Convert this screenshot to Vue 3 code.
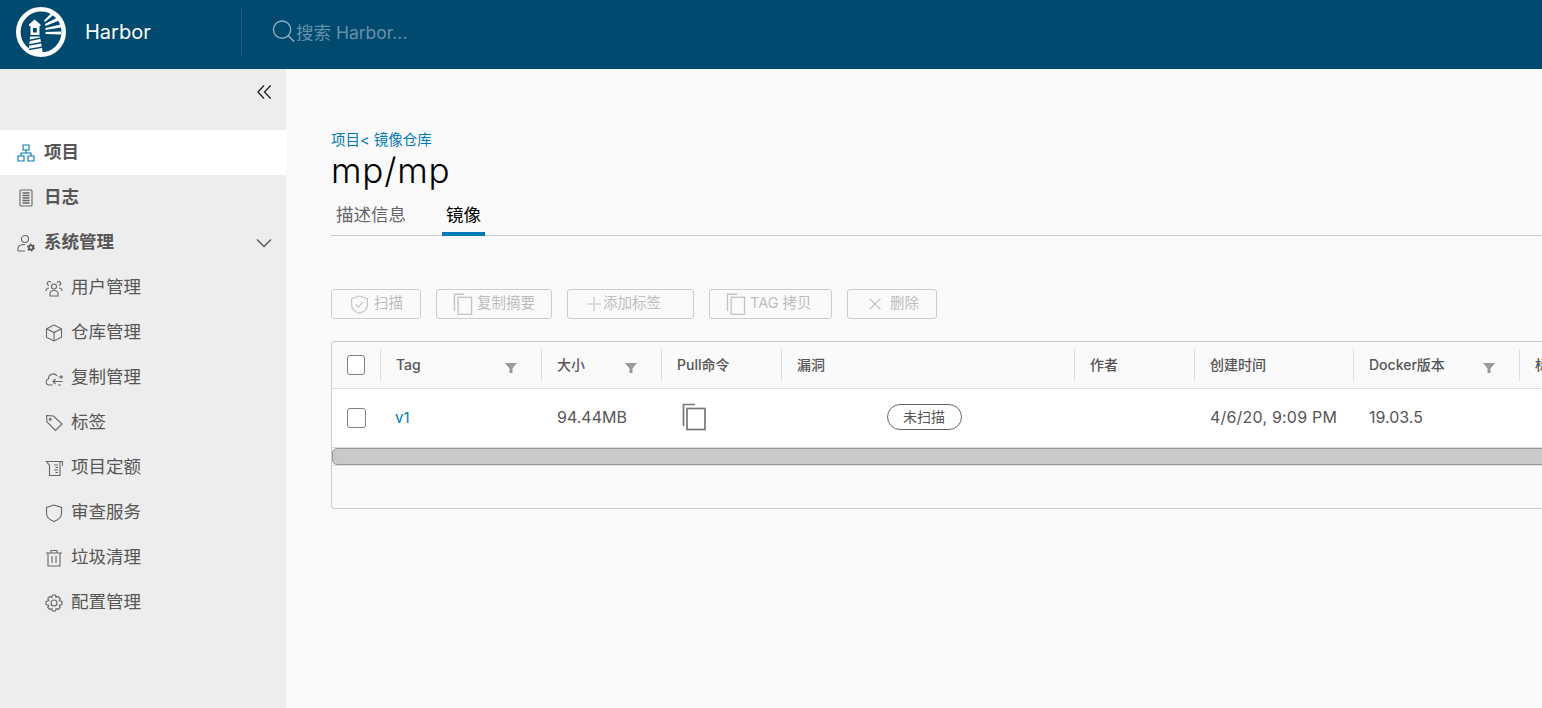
<template>
  <div class="page">
    <header class="topbar">
      <svg class="logo" viewBox="0 0 50 50">
        <circle cx="25" cy="25" r="22.7" fill="none" stroke="#fff" stroke-width="4.6" />
        <path class="logo-fill" d="M18.500 12.500 24.500 17.500V19H13V17.500Z" />
        <path class="logo-fill" d="M14.500 19H23.500V28H14.500ZM17 21V25.500H20.800V21Z" fill-rule="evenodd" />
        <path class="logo-fill" d="M14 29.500H24L27 47H12.500Z" />
        <path class="logo-cut" d="M13 33.500 25 31M13 38 26 35.500M13 42.500 27 40" />
        <path class="logo-fill" d="M28 13.500 36 5.500 38.500 7 29 15ZM29 17 41.500 10.500 43 13.500 29.500 19ZM29.500 21 44.500 17.500 45 20.500 29.500 23ZM29.500 25 45 24.500 45 27.500 29.500 27Z" />
      </svg>
      <span class="brand">Harbor</span>
      <div class="search">
        <svg class="search-icon" viewBox="0 0 24 24">
          <circle cx="10.5" cy="10" r="9" />
          <path d="M17 16.500 23 22.500" />
        </svg>
        <span>搜索 Harbor...</span>
      </div>
    </header>

    <div class="body">
      <aside class="sidebar">
        <div class="collapse">
          <svg viewBox="0 0 16 16"><path d="M7.500 1 1 8 7.500 15M14.500 1 8 8 14.500 15" /></svg>
        </div>
        <nav>
          <a class="nav-item top active">
            <svg class="nav-icon blue" viewBox="0 0 18 18">
              <path d="M6 1h6v5H6zM1 12h6v5H1zM11 12h6v5h-6zM9 6v3M4 12V9h10v3" />
            </svg>
            <span class="label">项目</span>
          </a>
          <a class="nav-item top">
            <svg class="nav-icon" viewBox="0 0 18 18">
              <rect x="3" y="1" width="12" height="16" rx="1" />
              <path class="thick" d="M5.500 4h7M5.500 6.500h7M5.500 9h7M5.500 11.500h7M5.500 14h7" />
            </svg>
            <span class="label">日志</span>
          </a>
          <a class="nav-item top">
            <svg class="nav-icon" viewBox="0 0 18 18">
              <circle cx="8" cy="5" r="3.500" />
              <path d="M1 17v-2.500c0-2.500 3-4 7-4M1 17h7" />
              <circle class="gear-teeth" cx="14" cy="13.500" r="3.300" />
              <circle class="gear" cx="14" cy="13.500" r="2.100" />
            </svg>
            <span class="label">系统管理</span>
            <svg class="chevron" viewBox="0 0 16 10"><path d="M1 1.500 8 8.500 15 1.500" /></svg>
          </a>

          <a v-for="child in children" :key="child.label" class="nav-item sub">
            <svg class="nav-icon" viewBox="0 0 18 18" v-html="child.icon"></svg>
            <span class="label">{{ child.label }}</span>
          </a>
        </nav>
      </aside>

      <main class="content">
        <div class="crumbs">项目&lt; 镜像仓库</div>
        <h1>mp/mp</h1>
        <div class="tabs">
          <span class="tab">描述信息</span>
          <span class="tab current">镜像</span>
        </div>

        <div class="actions">
          <button
            v-for="btn in buttons"
            :key="btn.label"
            :style="{ width: btn.width + 'px', paddingLeft: btn.pad + 'px', gap: btn.gap + 'px' }"
          >
            <svg :style="{ width: btn.size + 'px', height: btn.size + 'px' }" viewBox="0 0 18 18" v-html="btn.icon"></svg>
            <span class="btn-text">{{ btn.label }}</span>
          </button>
        </div>

        <div class="grid">
          <div class="row head">
            <div v-for="col in columns" :key="col.label" class="cell" :style="{ width: col.width + 'px' }">
              <span v-if="col.check" class="box"></span>
              <template v-else>{{ col.label }}</template>
              <svg v-if="col.filter" class="filter" viewBox="0 0 12 12"><path d="M0 1h12L7.500 6.500V11h-3V6.500Z" /></svg>
            </div>
          </div>
          <div class="row data">
            <div class="cell check" style="width: 49px"><span class="box"></span></div>
            <div class="cell link" style="width: 161px">v1</div>
            <div class="cell" style="width: 120px">94.44MB</div>
            <div class="cell" style="width: 120px">
              <svg class="copy" viewBox="0 0 26 28">
                <path d="M14 1.500H2.500V23" />
                <rect x="6" y="5.500" width="18" height="21" />
              </svg>
            </div>
            <div class="cell scan" style="width: 293px"><span class="pill">未扫描</span></div>
            <div class="cell" style="width: 120px"></div>
            <div class="cell date" style="width: 159px">4/6/20, 9:09 PM</div>
            <div class="cell" style="width: 166px">19.03.5</div>
          </div>
          <div class="scrollbar"><div class="thumb"></div></div>
          <div class="foot"></div>
        </div>
      </main>
    </div>
  </div>
</template>

<script setup>
const copyIcon = '<path d="M10 1H2v14" /><rect x="5" y="3.500" width="11" height="14" />'

const children = [
  {
    label: '用户管理',
    icon: '<circle cx="9" cy="7.500" r="2.500" /><path d="M5 17v-2.500c0-1.500 1.500-3 4-3s4 1.500 4 3V17ZM6 3.500a2 2 0 1 0-2 3M12 3.500a2 2 0 1 1 2 3M1 12c0-2 1-3 3-3M17 12c0-2-1-3-3-3" />',
  },
  {
    label: '仓库管理',
    icon: '<path d="M9 1 16.500 4.800V13.200L9 17 1.500 13.200V4.800ZM1.500 4.800 9 8.600 16.500 4.800M9 8.600V17" />',
  },
  {
    label: '复制管理',
    icon: '<path d="M7.500 16H4.500C.5 16 0 10.800 3.500 9.800 3.500 5.500 9 3 12 6.800M13 16h3M17.500 12.500H8M10.500 10 8 12.500 10.500 15M13.500 8H17M15.800 6.500 17.300 8 15.800 9.500" />',
  },
  {
    label: '标签',
    icon: '<path d="M1.500 1.500 8.500 2 17 10 10.500 16.500 2 8Z" /><circle cx="5.200" cy="5.200" r="1" />',
  },
  {
    label: '项目定额',
    icon: '<path d="M.5 2.500H17.500V7M1.500 2.500 4.500 6.500V16.500H15V2.500M9 6H13M10.500 8.500H13M9 11H13M10.500 13.500H13" />',
  },
  {
    label: '审查服务',
    icon: '<path d="M9 1 16.500 3.500V9.500C16.500 13.500 13 16 9 17.500 5 16 1.500 13.500 1.500 9.500V3.500Z" />',
  },
  {
    label: '垃圾清理',
    icon: '<path d="M1 4H17M6 4V1.500H12V4M3 4V17H15V4M7 7V14M11 7V14" />',
  },
  {
    label: '配置管理',
    icon: '<circle cx="9" cy="9" r="3" /><path d="M7.500 1h3l.6 2.400 2-.9 2.200 2.100-1 2.100 2.700.7v3.200l-2.700.7 1 2.100-2.200 2.100-2-.9-.6 2.400h-3l-.6-2.400-2 .9-2.200-2.100 1-2.100L1 10.600V7.400l2.700-.7-1-2.100 2.200-2.100 2 .9Z" />',
  },
]

const buttons = [
  {
    label: '扫描',
    width: 90,
    size: 19,
    pad: 18,
    gap: 5,
    icon: '<path d="M9 1 16.500 3.500V9.500C16.500 13.500 13 16 9 17.500 5 16 1.500 13.500 1.500 9.500V3.500Z" /><path d="M5.500 9 8 11.500 12.500 6.500" />',
  },
  { label: '复制摘要', width: 116, size: 22, pad: 15, gap: 3, icon: copyIcon },
  { label: '添加标签', width: 127, size: 18, pad: 17, gap: 0, icon: '<path d="M9 2V16M2 9H16" />' },
  { label: 'TAG 拷贝', width: 123, size: 22, pad: 15, gap: 3, icon: copyIcon },
  { label: '删除', width: 90, size: 18, pad: 18, gap: 6, icon: '<path d="M3.500 3.500 14.500 14.500M14.500 3.500 3.500 14.500" />' },
]

const columns = [
  { label: 'check', check: true, width: 49 },
  { label: 'Tag', filter: true, width: 161 },
  { label: '大小', filter: true, width: 120 },
  { label: 'Pull命令', width: 120 },
  { label: '漏洞', width: 293 },
  { label: '作者', width: 120 },
  { label: '创建时间', width: 159 },
  { label: 'Docker版本', filter: true, width: 166 },
  { label: '标签', width: 120 },
]
</script>

<style>
html,
body {
  margin: 0;
  height: 100%;
  overflow: hidden;
}
</style>

<style scoped>
.page {
  width: 1542px;
  height: 708px;
  overflow: hidden;
  display: flex;
  flex-direction: column;
  font-family: Inter, "Noto Sans CJK SC", sans-serif;
  background: #fafafa;
}

.topbar {
  flex: 0 0 69px;
  display: flex;
  align-items: center;
  background: #004a70;
  color: #fff;
  padding-bottom: 6px;
  box-sizing: border-box;
}

.logo {
  width: 50px;
  height: 50px;
  margin-left: 16px;
}

.logo-fill {
  fill: #fff;
}

.logo-cut {
  fill: none;
  stroke: #004a70;
  stroke-width: 1.600;
}

.brand {
  width: 156px;
  margin-left: 19px;
  font-size: 20px;
  box-sizing: border-box;
}

.search {
  height: 50px;
  width: 300px;
  display: flex;
  align-items: center;
  padding-left: 30px;
  border-left: 1px solid #1a5c80;
  color: #6690a8;
  font-size: 17.500px;
  box-sizing: border-box;
}

.search-icon {
  flex: none;
  width: 23px;
  height: 23px;
  margin-right: 1px;
  fill: none;
  stroke: #8fb2c5;
  stroke-width: 1.400;
}

.body {
  flex: 1;
  display: flex;
  min-height: 0;
}

.sidebar {
  flex: 0 0 286px;
  background: #ededed;
}

.collapse {
  height: 61px;
  display: flex;
  justify-content: flex-end;
  padding: 15px 14px 0 0;
  box-sizing: border-box;
}

.collapse svg {
  width: 15px;
  height: 16px;
  fill: none;
  stroke: #222;
  stroke-width: 1.400;
}

.nav-item {
  height: 45px;
  display: flex;
  align-items: center;
  color: #565656;
  font-size: 17.500px;
}

.label {
  margin-bottom: 4px;
}

.nav-item.top {
  padding-left: 17px;
  font-weight: 700;
}

.nav-item.top .nav-icon {
  margin-right: 9px;
}

.nav-item.sub {
  padding-left: 45px;
}

.nav-item.active {
  background: #fff;
}

.nav-icon {
  flex: 0 0 18px;
  width: 18px;
  height: 18px;
  margin-right: 8px;
  fill: none;
  stroke: #666;
  stroke-width: 1.100;
}

.nav-icon.blue {
  stroke: #0079b8;
}

.nav-icon .thick {
  stroke-width: 1.400;
}

.nav-icon .gear {
  stroke: #565656;
  stroke-width: 1.800;
  fill: #ededed;
}

.nav-icon .gear-teeth {
  stroke: #565656;
  stroke-width: 1.400;
  stroke-dasharray: 1.700 1.750;
}

.chevron {
  width: 16px;
  height: 10px;
  margin-left: auto;
  margin-right: 14px;
  fill: none;
  stroke: #565656;
  stroke-width: 1.400;
}

.content {
  flex: 1;
  min-width: 0;
  padding: 62px 0 0 45px;
  box-sizing: border-box;
}

.crumbs {
  height: 16px;
  font-size: 14.500px;
  line-height: 18px;
  color: #0079b8;
}

h1 {
  margin: 3px 0 1px;
  height: 40px;
  font-size: 35px;
  line-height: 40px;
  font-weight: 300;
  color: #000;
  letter-spacing: 0.800px;
}

.tabs {
  display: flex;
  height: 44px;
  border-bottom: 1px solid #ccc;
}

.tab {
  margin-left: 5px;
  margin-right: 36px;
  font-size: 17.500px;
  line-height: 48px;
  color: #666;
}

.tab.current {
  margin: 0;
  padding: 0 4px;
  height: 41px;
  color: #000;
  border-bottom: 4px solid #0079b8;
}

.actions {
  display: flex;
  gap: 15px;
  margin-top: 53px;
}

.actions button {
  height: 30px;
  display: flex;
  align-items: center;
  padding: 0;
  border: 1px solid #ccc;
  border-radius: 3px;
  background: transparent;
  color: #bdbdbd;
  font-family: inherit;
  font-size: 14.500px;
  box-sizing: border-box;
}

.btn-text {
  margin-bottom: 5px;
}

.actions svg {
  flex: none;
  fill: none;
  stroke: #c4c4c4;
  stroke-width: 1.100;
}

.grid {
  width: 1400px;
  height: 168px;
  margin-top: 22px;
  border: 1px solid #ccc;
  border-radius: 3px;
  box-sizing: border-box;
  overflow: hidden;
}

.row {
  display: flex;
}

.head {
  height: 47px;
  align-items: center;
  border-bottom: 1px solid #ddd;
  box-sizing: border-box;
  color: #565656;
  font-size: 14px;
  font-weight: 500;
}

.head .cell {
  position: relative;
  height: 32px;
  border-right: 1px solid #ddd;
  padding: 0 15px;
  line-height: 30px;
}

.data {
  height: 58px;
  align-items: center;
  background: #fff;
  color: #565656;
  font-size: 16px;
}

.cell {
  flex: none;
  display: flex;
  align-items: center;
  box-sizing: border-box;
  padding: 0 15px;
  white-space: nowrap;
}

.data .cell {
  padding-bottom: 2px;
}

.data .cell.check {
  padding-bottom: 0;
}

.data .date {
  letter-spacing: 0.200px;
}

.head .cell:last-child {
  border-right: 0;
}

.data .link {
  color: #0079b8;
  font-size: 15px;
  padding-left: 14px;
}

.data .scan {
  justify-content: center;
  padding-left: 0;
  padding-right: 9px;
}

.box {
  width: 20px;
  height: 20px;
  border: 1px solid #808080;
  border-radius: 3px;
  box-sizing: border-box;
  background: #fff;
}

.filter {
  position: absolute;
  top: 13px;
  right: 24px;
  width: 12px;
  height: 12px;
  fill: #999;
}

.copy {
  width: 26px;
  height: 28px;
  margin-left: 4px;
  fill: none;
  stroke: #777;
  stroke-width: 1.700;
}

.pill {
  width: 75px;
  height: 26px;
  border: 1px solid #666;
  border-radius: 13px;
  box-sizing: border-box;
  background: #fff;
  font-size: 14px;
  line-height: 24px;
  text-align: center;
}

.scrollbar {
  height: 18px;
  box-sizing: border-box;
  border-top: 1px solid #ddd;
  background: #fafafa;
}

.thumb {
  height: 17px;
  box-sizing: border-box;
  border: 1px solid #999;
  border-radius: 5px 0 0 5px;
  background: #c9c9c9;
}

.foot {
  height: 44px;
  border-top: 1px solid #ddd;
}
</style>
